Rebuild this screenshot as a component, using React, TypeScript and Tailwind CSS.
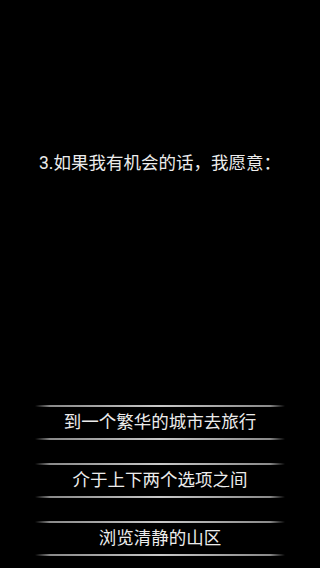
const options = ["到一个繁华的城市去旅行", "介于上下两个选项之间", "浏览清静的山区"];

function Rule() {
  return (
    <div className="mx-auto h-[2px] w-[250px] bg-[linear-gradient(to_right,transparent,#8a8a8a_6%,#c8c8c8_50%,#8a8a8a_94%,transparent)]" />
  );
}

export default function App() {
  return (
    <div
      className="flex h-[568px] w-[320px] flex-col overflow-hidden bg-black text-[#ececec]"
      style={{ fontFamily: '"Roboto", "Noto Sans CJK SC", sans-serif' }}
    >
      <p className="mt-[151px] h-[24px] text-center text-[17.5px] leading-[24px]">3.如果我有机会的话，我愿意：</p>

      <ul className="mt-auto mb-[12px] flex flex-col gap-[23px]">
        {options.map((o) => (
          <li key={o} className="flex flex-col">
            <Rule />
            <button className="flex h-[31px] items-center justify-center text-[17.5px] leading-none">{o}</button>
            <Rule />
          </li>
        ))}
      </ul>
    </div>
  );
}
